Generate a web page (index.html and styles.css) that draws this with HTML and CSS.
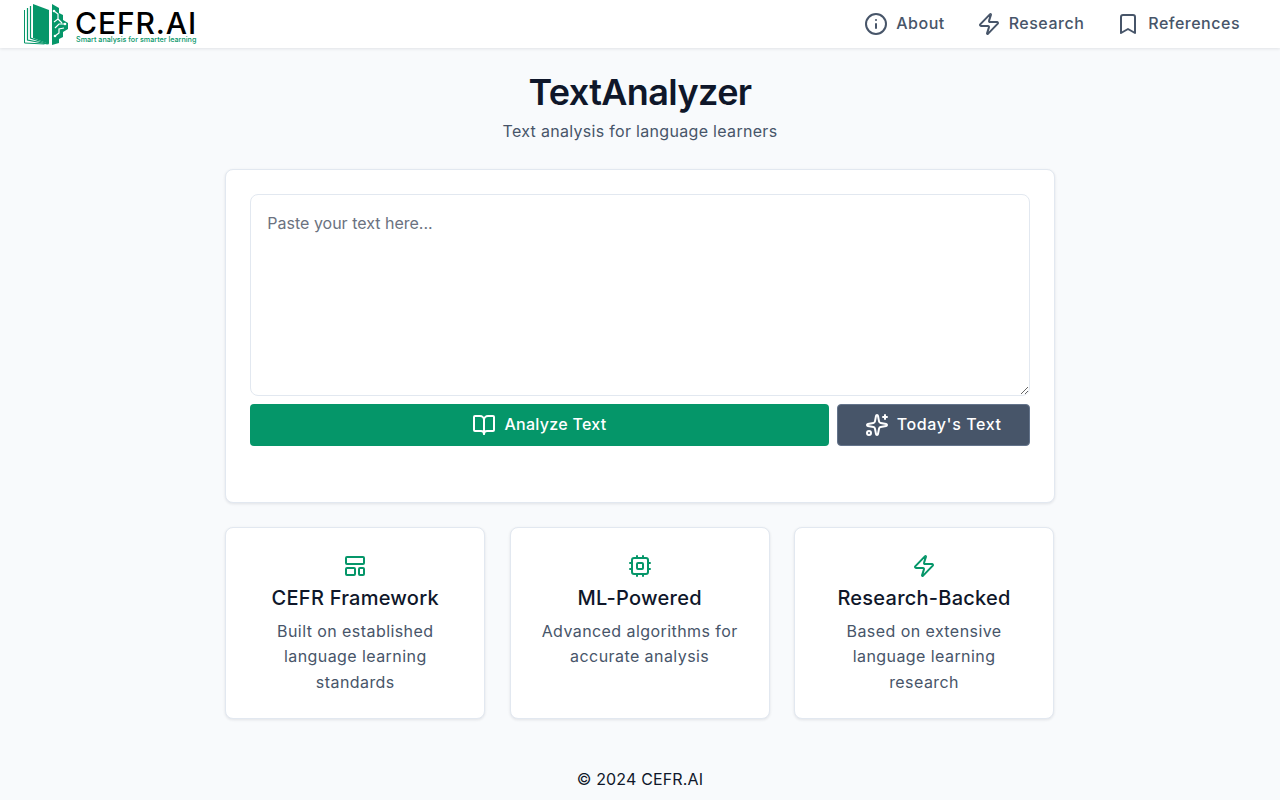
FILE: index.html
```html
<!DOCTYPE html>
<html lang="en">
<head>
  <meta charset="UTF-8">
  <meta name="viewport" content="width=device-width, initial-scale=1.0">
  <title>TextAnalyzer - CEFR.AI</title>
  <link rel="stylesheet" href="styles.css">
</head>
<body>
  <header class="topbar">
    <a class="logo" href="#">
      <svg class="logo-mark" width="45" height="42" viewBox="0 0 45 42">
        <path d="M0.5 7v33l20 1" fill="none" stroke="#059669" stroke-width="1"/>
        <path d="M3.5 5v32l20 4" fill="none" stroke="#059669" stroke-width="1.2"/>
        <path d="M6.5 3v32l18 6" fill="none" stroke="#059669" stroke-width="1.2"/>
        <path d="M9 1l16 6v34L9 35z" fill="#059669"/>
        <path d="M28 1l7 4v5l4 2v5l5 3v6l-5 3v5l-4 2v4l-7 2z" fill="#059669"/>
        <path d="M30 8l4 3v5l-4 3M41 21h-6l-4 4M31 33l4-3v-4l5-1M34 16l4 4" fill="none" stroke="#fff" stroke-width="1.2"/>
        <circle cx="30" cy="8" r="1.3" fill="#fff"/>
        <circle cx="31" cy="33" r="1.3" fill="#fff"/>
        <circle cx="41" cy="21" r="1.3" fill="#fff"/>
      </svg>
      <span class="logo-text">
        <span class="logo-name">CEFR.AI</span>
        <span class="logo-tag">Smart analysis for smarter learning</span>
      </span>
    </a>
    <nav class="nav">
      <a href="#" class="nav-link">
        <svg class="icon" viewBox="0 0 24 24"><circle cx="12" cy="12" r="10"/><path d="M12 16v-4"/><path d="M12 8h.01"/></svg>
        <span class="label">About</span>
      </a>
      <a href="#" class="nav-link">
        <svg class="icon" viewBox="0 0 24 24"><path d="M4 14a1 1 0 0 1-.78-1.63l9.9-10.2a.5.5 0 0 1 .86.46l-1.92 6.02A1 1 0 0 0 13 10h7a1 1 0 0 1 .78 1.63l-9.9 10.2a.5.5 0 0 1-.86-.46l1.92-6.02A1 1 0 0 0 11 14z"/></svg>
        <span class="label">Research</span>
      </a>
      <a href="#" class="nav-link">
        <svg class="icon" viewBox="0 0 24 24"><path d="m19 21-7-4-7 4V5a2 2 0 0 1 2-2h10a2 2 0 0 1 2 2v16z"/></svg>
        <span class="label">References</span>
      </a>
    </nav>
  </header>

  <main class="main">
    <h1>TextAnalyzer</h1>
    <p class="subtitle">Text analysis for language learners</p>

    <section class="card input-card">
      <textarea class="text-input" placeholder="Paste your text here..."></textarea>
      <div class="actions">
        <button class="btn btn-primary">
          <svg class="icon" viewBox="0 0 24 24"><path d="M12 7v14"/><path d="M3 18a1 1 0 0 1-1-1V4a1 1 0 0 1 1-1h5a4 4 0 0 1 4 4 4 4 0 0 1 4-4h5a1 1 0 0 1 1 1v13a1 1 0 0 1-1 1h-6a3 3 0 0 0-3 3 3 3 0 0 0-3-3z"/></svg>
          <span class="label">Analyze Text</span>
        </button>
        <button class="btn btn-dark">
          <svg class="icon" viewBox="0 0 24 24"><path d="M11.017 2.814a1 1 0 0 1 1.966 0l1.051 5.558a2 2 0 0 0 1.594 1.594l5.558 1.051a1 1 0 0 1 0 1.966l-5.558 1.051a2 2 0 0 0-1.594 1.594l-1.051 5.558a1 1 0 0 1-1.966 0l-1.051-5.558a2 2 0 0 0-1.594-1.594l-5.558-1.051a1 1 0 0 1 0-1.966l5.558-1.051a2 2 0 0 0 1.594-1.594z"/><path d="M20 2v4"/><path d="M22 4h-4"/><circle cx="4" cy="20" r="2"/></svg>
          <span class="label">Today's Text</span>
        </button>
      </div>
    </section>

    <section class="features">
      <div class="card feature">
        <svg class="icon feature-icon" viewBox="0 0 24 24"><rect width="18" height="7" x="3" y="3" rx="1"/><rect width="9" height="7" x="3" y="14" rx="1"/><rect width="5" height="7" x="16" y="14" rx="1"/></svg>
        <h3>CEFR Framework</h3>
        <p>Built on established language learning standards</p>
      </div>
      <div class="card feature">
        <svg class="icon feature-icon" viewBox="0 0 24 24"><rect width="16" height="16" x="4" y="4" rx="2"/><rect width="6" height="6" x="9" y="9" rx="1"/><path d="M15 2v2"/><path d="M15 20v2"/><path d="M2 15h2"/><path d="M2 9h2"/><path d="M20 15h2"/><path d="M20 9h2"/><path d="M9 2v2"/><path d="M9 20v2"/></svg>
        <h3>ML-Powered</h3>
        <p>Advanced algorithms for accurate analysis</p>
      </div>
      <div class="card feature">
        <svg class="icon feature-icon" viewBox="0 0 24 24"><path d="M4 14a1 1 0 0 1-.78-1.63l9.9-10.2a.5.5 0 0 1 .86.46l-1.92 6.02A1 1 0 0 0 13 10h7a1 1 0 0 1 .78 1.63l-9.9 10.2a.5.5 0 0 1-.86-.46l1.92-6.02A1 1 0 0 0 11 14z"/></svg>
        <h3>Research-Backed</h3>
        <p>Based on extensive language learning research</p>
      </div>
    </section>
  </main>

  <footer class="footer">© 2024 CEFR.AI</footer>
</body>
</html>
```

FILE: styles.css
```css
* {
  box-sizing: border-box;
}
body {
  font-family: Inter, "Noto Sans", sans-serif;
  background-color: #f8fafc;
  color: #0f172a;
  margin: 0;
  height: 800px;
  overflow: hidden;
}
.icon {
  width: 24px;
  height: 24px;
  flex: none;
  fill: none;
  stroke: currentColor;
  stroke-width: 2;
  stroke-linecap: round;
  stroke-linejoin: round;
}
.label {
  padding-bottom: 2px;
}

/* top bar */
.topbar {
  height: 48px;
  background: #fff;
  box-shadow: 0 1px 3px rgba(15, 23, 42, 0.1);
  display: flex;
  align-items: center;
  justify-content: space-between;
  padding: 0 40px 0 24px;
}
.logo {
  display: flex;
  align-items: center;
  gap: 7px;
  text-decoration: none;
  color: #000;
}
.logo-mark {
  display: block;
}
.logo-text {
  display: flex;
  flex-direction: column;
  margin-top: 7px;
}
.logo-name {
  font-size: 30px;
  font-weight: 500;
  line-height: 24px;
  letter-spacing: 0.9px;
  margin-left: -1px;
}
.logo-tag {
  font-size: 7.2px;
  font-weight: 500;
  line-height: 8px;
  margin-top: 1px;
  color: #059669;
  white-space: nowrap;
}
.nav {
  display: flex;
  gap: 32px;
}
.nav-link {
  display: flex;
  align-items: center;
  gap: 8px;
  color: #475569;
  font-size: 16px;
  font-weight: 500;
  text-decoration: none;
  letter-spacing: 0.5px;
}

/* main column */
.main {
  width: 829.33px;
  margin: 0 auto;
  padding-top: 22px;
}
h1 {
  margin: 0;
  text-align: center;
  font-size: 36px;
  font-weight: 600;
  line-height: 44px;
  letter-spacing: -0.6px;
}
.subtitle {
  margin: 5px 0 26px;
  text-align: center;
  font-size: 16px;
  line-height: 24px;
  letter-spacing: 0.31px;
  color: #475569;
}
.card {
  background: #fff;
  border: 1px solid #e2e8f0;
  border-radius: 8px;
  box-shadow: 0 1px 3px rgba(15, 23, 42, 0.1);
}
.input-card {
  height: 334px;
  padding: 24px;
}
.text-input {
  display: block;
  width: 100%;
  height: 202px;
  padding: 16px;
  border: 1px solid #e2e8f0;
  border-radius: 8px;
  font-family: Inter, sans-serif;
  font-size: 16px;
  line-height: 24px;
  color: #0f172a;
  background: #fff;
}
.text-input::placeholder {
  color: #6b7280;
}
.actions {
  display: flex;
  gap: 8px;
  margin-top: 8px;
}
.btn {
  height: 42px;
  border: none;
  border-radius: 4px;
  display: flex;
  align-items: center;
  justify-content: center;
  gap: 8px;
  color: #fff;
  font-family: Inter, sans-serif;
  font-size: 16px;
  font-weight: 500;
  letter-spacing: 0.3px;
  cursor: pointer;
}
.btn-primary {
  flex: 1;
  background-color: #059669;
}
.btn-dark {
  width: 193px;
  background-color: #475569;
  border: 1px solid #64748b;
  letter-spacing: 0.6px;
}

/* feature cards */
.features {
  display: grid;
  grid-template-columns: repeat(3, 1fr);
  gap: 24.5px;
  margin: 24px 0.67px 0 0;
}
.feature {
  height: 192px;
  padding: 26px 24px 0;
  text-align: center;
}
.feature-icon {
  display: block;
  margin: 0 auto;
  color: #059669;
}
.feature h3 {
  margin: 6px 0 6.7px;
  font-size: 20px;
  font-weight: 500;
  line-height: 28px;
  letter-spacing: 0.25px;
}
.feature p {
  margin: 0;
  font-size: 16px;
  line-height: 25.6px;
  letter-spacing: 0.43px;
  color: #475569;
}

.footer {
  margin-top: 48px;
  text-align: center;
  font-size: 16px;
  line-height: 24px;
  letter-spacing: 0.15px;
}
```
